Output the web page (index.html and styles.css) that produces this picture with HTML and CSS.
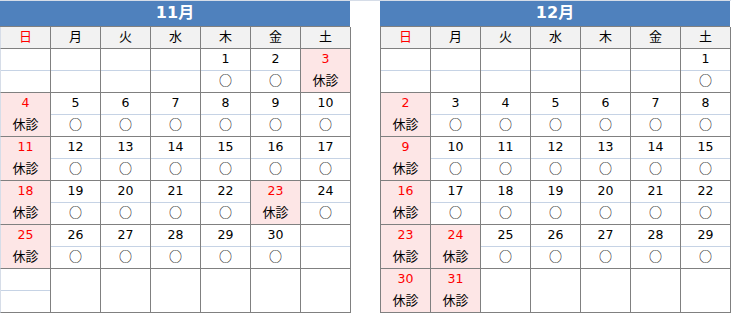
FILE: index.html
```html
<!DOCTYPE html>
<html lang="ja">
<head>
<meta charset="utf-8">
<title>診療カレンダー</title>
<link rel="stylesheet" href="styles.css">
</head>
<body>
<div class="page">
  <div class="cal cal-left">
    <div class="title">11月</div>
    <div class="wd sun">日</div><div class="wd">月</div><div class="wd">火</div><div class="wd">水</div><div class="wd">木</div><div class="wd">金</div><div class="wd">土</div>

    <div class="c"><div class="d"></div><div class="s"></div></div>
    <div class="c"><div class="d"></div><div class="s"></div></div>
    <div class="c"><div class="d"></div><div class="s"></div></div>
    <div class="c"><div class="d"></div><div class="s"></div></div>
    <div class="c"><div class="d">1</div><div class="s">○</div></div>
    <div class="c"><div class="d">2</div><div class="s">○</div></div>
    <div class="c hol"><div class="d">3</div><div class="s">休診</div></div>

    <div class="c hol"><div class="d">4</div><div class="s">休診</div></div>
    <div class="c"><div class="d">5</div><div class="s">○</div></div>
    <div class="c"><div class="d">6</div><div class="s">○</div></div>
    <div class="c"><div class="d">7</div><div class="s">○</div></div>
    <div class="c"><div class="d">8</div><div class="s">○</div></div>
    <div class="c"><div class="d">9</div><div class="s">○</div></div>
    <div class="c"><div class="d">10</div><div class="s">○</div></div>

    <div class="c hol"><div class="d">11</div><div class="s">休診</div></div>
    <div class="c"><div class="d">12</div><div class="s">○</div></div>
    <div class="c"><div class="d">13</div><div class="s">○</div></div>
    <div class="c"><div class="d">14</div><div class="s">○</div></div>
    <div class="c"><div class="d">15</div><div class="s">○</div></div>
    <div class="c"><div class="d">16</div><div class="s">○</div></div>
    <div class="c"><div class="d">17</div><div class="s">○</div></div>

    <div class="c hol"><div class="d">18</div><div class="s">休診</div></div>
    <div class="c"><div class="d">19</div><div class="s">○</div></div>
    <div class="c"><div class="d">20</div><div class="s">○</div></div>
    <div class="c"><div class="d">21</div><div class="s">○</div></div>
    <div class="c"><div class="d">22</div><div class="s">○</div></div>
    <div class="c hol"><div class="d">23</div><div class="s">休診</div></div>
    <div class="c"><div class="d">24</div><div class="s">○</div></div>

    <div class="c hol"><div class="d">25</div><div class="s">休診</div></div>
    <div class="c"><div class="d">26</div><div class="s">○</div></div>
    <div class="c"><div class="d">27</div><div class="s">○</div></div>
    <div class="c"><div class="d">28</div><div class="s">○</div></div>
    <div class="c"><div class="d">29</div><div class="s">○</div></div>
    <div class="c"><div class="d">30</div><div class="s">○</div></div>
    <div class="c"><div class="d"></div><div class="s"></div></div>

    <div class="c"><div class="d"></div><div class="s"></div></div>
    <div class="c nosep"><div class="d"></div><div class="s"></div></div>
    <div class="c nosep"><div class="d"></div><div class="s"></div></div>
    <div class="c nosep"><div class="d"></div><div class="s"></div></div>
    <div class="c nosep"><div class="d"></div><div class="s"></div></div>
    <div class="c nosep"><div class="d"></div><div class="s"></div></div>
    <div class="c nosep"><div class="d"></div><div class="s"></div></div>
  </div>

  <div class="cal cal-right">
    <div class="title">12月</div>
    <div class="wd sun">日</div><div class="wd">月</div><div class="wd">火</div><div class="wd">水</div><div class="wd">木</div><div class="wd">金</div><div class="wd">土</div>

    <div class="c"><div class="d"></div><div class="s"></div></div>
    <div class="c"><div class="d"></div><div class="s"></div></div>
    <div class="c"><div class="d"></div><div class="s"></div></div>
    <div class="c"><div class="d"></div><div class="s"></div></div>
    <div class="c"><div class="d"></div><div class="s"></div></div>
    <div class="c"><div class="d"></div><div class="s"></div></div>
    <div class="c"><div class="d">1</div><div class="s">○</div></div>

    <div class="c hol"><div class="d">2</div><div class="s">休診</div></div>
    <div class="c"><div class="d">3</div><div class="s">○</div></div>
    <div class="c"><div class="d">4</div><div class="s">○</div></div>
    <div class="c"><div class="d">5</div><div class="s">○</div></div>
    <div class="c"><div class="d">6</div><div class="s">○</div></div>
    <div class="c"><div class="d">7</div><div class="s">○</div></div>
    <div class="c"><div class="d">8</div><div class="s">○</div></div>

    <div class="c hol"><div class="d">9</div><div class="s">休診</div></div>
    <div class="c"><div class="d">10</div><div class="s">○</div></div>
    <div class="c"><div class="d">11</div><div class="s">○</div></div>
    <div class="c"><div class="d">12</div><div class="s">○</div></div>
    <div class="c"><div class="d">13</div><div class="s">○</div></div>
    <div class="c"><div class="d">14</div><div class="s">○</div></div>
    <div class="c"><div class="d">15</div><div class="s">○</div></div>

    <div class="c hol"><div class="d">16</div><div class="s">休診</div></div>
    <div class="c"><div class="d">17</div><div class="s">○</div></div>
    <div class="c"><div class="d">18</div><div class="s">○</div></div>
    <div class="c"><div class="d">19</div><div class="s">○</div></div>
    <div class="c"><div class="d">20</div><div class="s">○</div></div>
    <div class="c"><div class="d">21</div><div class="s">○</div></div>
    <div class="c"><div class="d">22</div><div class="s">○</div></div>

    <div class="c hol"><div class="d">23</div><div class="s">休診</div></div>
    <div class="c hol"><div class="d">24</div><div class="s">休診</div></div>
    <div class="c"><div class="d">25</div><div class="s">○</div></div>
    <div class="c"><div class="d">26</div><div class="s">○</div></div>
    <div class="c"><div class="d">27</div><div class="s">○</div></div>
    <div class="c"><div class="d">28</div><div class="s">○</div></div>
    <div class="c"><div class="d">29</div><div class="s">○</div></div>

    <div class="c hol"><div class="d">30</div><div class="s">休診</div></div>
    <div class="c hol"><div class="d">31</div><div class="s">休診</div></div>
    <div class="c nosep"><div class="d"></div><div class="s"></div></div>
    <div class="c nosep"><div class="d"></div><div class="s"></div></div>
    <div class="c nosep"><div class="d"></div><div class="s"></div></div>
    <div class="c nosep"><div class="d"></div><div class="s"></div></div>
    <div class="c nosep"><div class="d"></div><div class="s"></div></div>
  </div>
</div>
</body>
</html>
```

FILE: styles.css
```css
* {
  box-sizing: border-box;
}

html, body {
  margin: 0;
  padding: 0;
  background: #ffffff;
}

body {
  font-family: "DejaVu Sans", "Noto Sans CJK JP", sans-serif;
  font-size: 13px;
  color: #000000;
}

.page {
  display: flex;
  gap: 29px;
  width: 731px;
  border-top: 1px solid #d6dde8;
}

.cal {
  display: grid;
  grid-template-columns: 51px repeat(6, 50px);
  width: 351px;
}

.title {
  grid-column: 1 / -1;
  width: 350px;
  height: 26px;
  background: #4f81bd;
  color: #ffffff;
  font-weight: bold;
  font-size: 16px;
  line-height: 24px;
  text-align: center;
  border-bottom: 1px solid #808080;
}

.wd,
.c {
  border-right: 1px solid #808080;
  border-bottom: 1px solid #808080;
}

.wd:nth-of-type(7n+2),
.c:nth-of-type(7n+2) {
  border-left: 1px solid #808080;
}

.cal-left .wd:nth-of-type(7n+2),
.cal-left .c:nth-of-type(7n+2) {
  border-left-color: #d6dde8;
}

.wd {
  height: 22px;
  line-height: 18px;
  text-align: center;
  background: #f2f2f2;
  font-family: "Noto Sans CJK JP", sans-serif;
}

.wd.sun {
  color: #ff0000;
}

.c {
  height: 44px;
  text-align: center;
  background: #ffffff;
}

.d {
  height: 21px;
  line-height: 20px;
  font-size: 12.5px;
}

.s {
  height: 22px;
  line-height: 18px;
  border-top: 1px solid #c6d3e5;
  font-family: "Noto Sans CJK JP", sans-serif;
}

.c.nosep .s {
  border-top-color: transparent;
}

.c.hol {
  background: #fde6e6;
}

.c.hol .d {
  color: #ff0000;
}

.c.hol .s {
  border-top-color: transparent;
}
```
